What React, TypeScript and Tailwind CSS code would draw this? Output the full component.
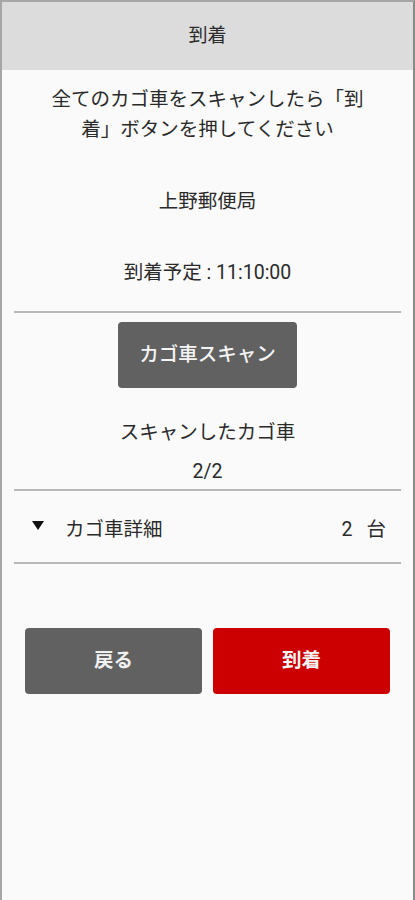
const font = { fontFamily: 'Roboto, "Noto Sans CJK JP", sans-serif' }

function Divider() {
    return <div className="mx-[12px] h-[2px] bg-[#b8b8b8]" />
}

export default function App() {
    return (
        <div
            className="flex h-[900px] w-[415px] flex-col border-l-2 border-r-2 border-t-2 border-l-[#a6a6a6] border-r-[#8a8a8a] border-t-[#a6a6a6] bg-[#fafafa] text-[#2a2a2a]"
            style={font}
        >
            {/* Header */}
            <div className="flex h-[68px] items-center justify-center bg-[#dcdcdc] text-[19px]">
                到着
            </div>

            <div className="mx-auto mt-[15px] w-[325px] text-center text-[19.5px] leading-[30px]">
                全てのカゴ車をスキャンしたら「到着」ボタンを押してください
            </div>

            <div className="mt-[42px] text-center text-[19.5px] leading-[30px]">上野郵便局</div>

            <div className="mt-[41px] text-center text-[19.5px] leading-[30px]">到着予定 : 11:10:00</div>

            <div className="mt-[23px]">
                <Divider />
            </div>

            <div className="mt-[9px] flex justify-center">
                <button className="h-[66px] w-[179px] rounded-[4px] bg-[#616161] text-[19.5px] font-medium text-[#f4f4f4]">
                    カゴ車スキャン
                </button>
            </div>

            <div className="mt-[30px] text-center text-[19.5px] leading-[30px]">スキャンしたカゴ車</div>
            <div className="mt-[9px] text-center text-[19.5px] leading-[30px]">2/2</div>

            <div className="mt-[2px]">
                <Divider />
            </div>

            <div className="flex h-[71px] items-center pl-[30px] pr-[27px] pt-[7px] text-[19.5px]">
                <svg width="12" height="9" viewBox="0 0 12 9" className="-mt-[10px]">
                    <polygon points="0,0 12,0 6,9" fill="#111" />
                </svg>
                <span className="ml-[21px]">カゴ車詳細</span>
                <span className="ml-auto flex gap-[14px]">
                    <span>2</span>
                    <span>台</span>
                </span>
            </div>

            <Divider />

            <div className="mt-[64px] flex gap-[11px] pl-[23px]">
                <button className="h-[66px] w-[177px] rounded-[4px] bg-[#616161] text-[19.5px] font-bold text-[#f0f0f0]">
                    戻る
                </button>
                <button className="h-[66px] w-[177px] rounded-[4px] bg-[#cc0000] text-[19.5px] font-bold text-[#f6f6f6]">
                    到着
                </button>
            </div>
        </div>
    )
}
